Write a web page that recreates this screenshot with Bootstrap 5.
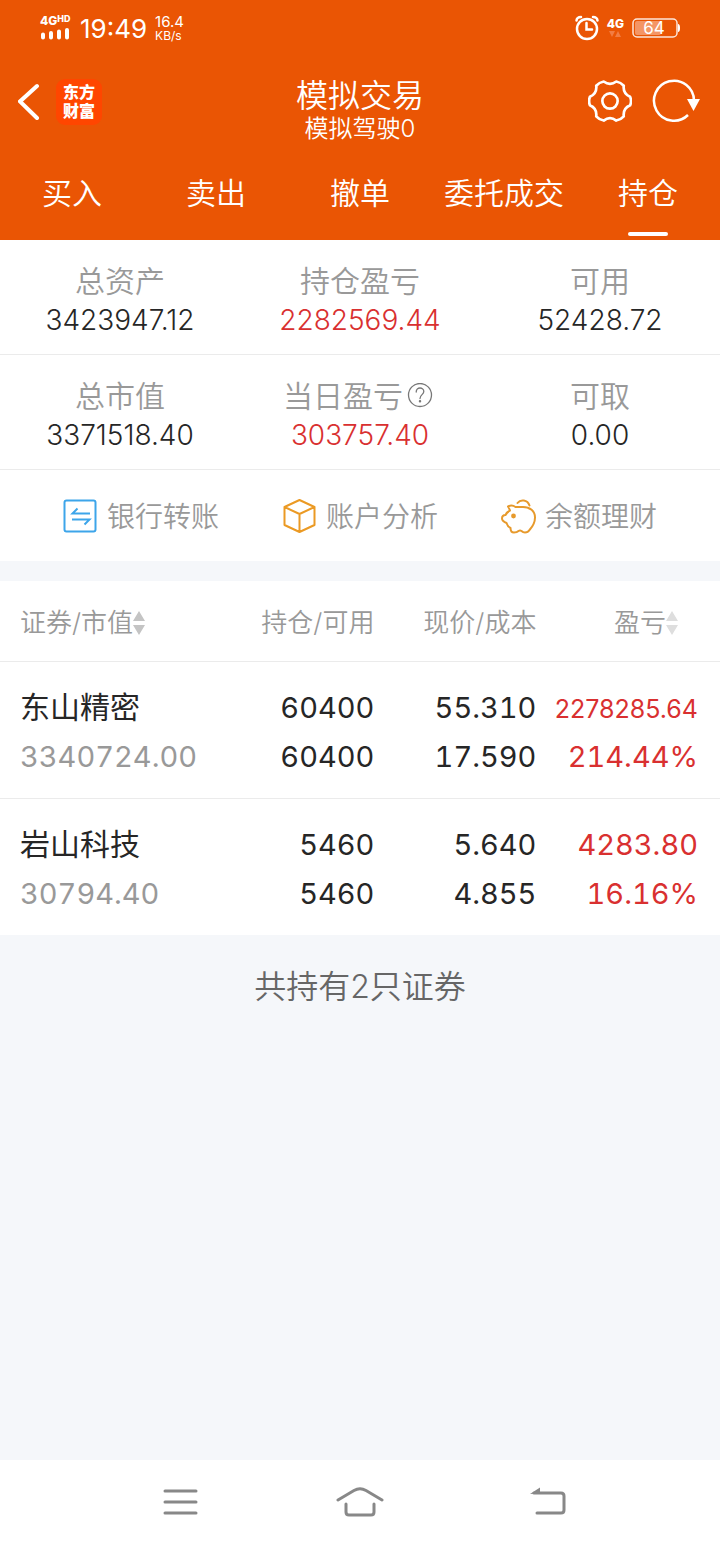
<!DOCTYPE html>
<html lang="zh-CN">
<head>
<meta charset="utf-8">
<meta name="viewport" content="width=device-width, initial-scale=1">
<title>模拟交易</title>
<link href="https://cdn.jsdelivr.net/npm/bootstrap@5.3.0/dist/css/bootstrap.min.css" rel="stylesheet">
<style>
  body { font-family: Inter, "Noto Sans CJK SC", sans-serif; background: #f5f7fa; color: #262626; }
  .plain-btn { border: 0; background: none; padding: 0; color: inherit; font-weight: inherit; display: inline-flex; align-items: center; }
  svg { display: block; flex: none; }
  .top-area { background: #ea5504; color: #fff; font-weight: 350; }
  .status-strip { height: 56px; padding: 0 40px; }
  .signal-box { font-size: 12px; line-height: 12px; font-weight: 800; }
  .signal-box sup { font-size: 9px; line-height: 8px; top: 0; vertical-align: top; }
  .clock { font-size: 26px; line-height: 32px; font-weight: 400; padding-top: 2px; }
  .net-speed { font-size: 15px; line-height: 13px; font-weight: 400; }
  .net-speed small { font-size: 12px; }
  .battery { font-size: 17px; font-weight: 400; }
  .title-bar { display: grid; grid-template-columns: 1fr auto 1fr; height: 92px; padding: 0 18px; }
  .title-bar h1 { font-size: 32px; line-height: 36px; font-weight: 350; }
  .title-bar p { font-size: 24px; line-height: 30px; }
  .title-block { padding-top: 18px; }
  .app-logo { background: #ff4600; border-radius: 9px; width: 46px; height: 46px; font-size: 16px; line-height: 19px; font-weight: 900; }
  .tab-row { height: 92px; }
  .tab-row a { position: relative; display: block; color: #fff; font-size: 30px; line-height: 90px; text-align: center; text-decoration: none; white-space: nowrap; }
  .tab-row a.active::after { content: ""; position: absolute; left: 50%; bottom: 4px; width: 40px; height: 4px; margin-left: -20px; border-radius: 2px; background: #fff; }
  .asset-row { height: 115px; border-bottom: 1px solid #ebebeb; font-weight: 350; padding-top: 21px; }
  .asset-row dt { font-size: 30px; line-height: 40px; font-weight: 350; color: #999; }
  .asset-row dd { font-size: 28px; line-height: 38px; margin: 0; }
  .action-row { height: 91px; color: #999; font-size: 28px; font-weight: 350; padding-top: 2px; }
  .action-row a { color: inherit; }
  .red-text { color: #d93030 !important; }
  .gray-text { color: #999 !important; }
  .holdings { table-layout: fixed; background: #fff; margin: 20px 0 0; width: 100%; }
  .holdings th, .holdings td { padding: 0; white-space: nowrap; }
  .holdings thead th { height: 80px; padding-top: 4px; color: #999; font-size: 26px; font-weight: 350; vertical-align: middle; }
  .holdings tbody tr { border-top: 1px solid #ebebeb; }
  .holdings tbody td { font-size: 29px; line-height: 49px; padding: 21px 0 17px; font-variant-numeric: tabular-nums; }
  .holdings tr > :first-child { padding-left: 20px; }
  .holdings tr > :last-child { padding-right: 22px; }
  .holdings thead tr > :last-child { padding-right: 42px; }
  .holdings .stock-name { font-size: 30px; line-height: 40px; }
  .holdings .long-num { font-size: 25px; line-height: 30px; font-variant-numeric: normal; }
  .count-note { font-size: 32px; line-height: 44px; color: #666; font-weight: 350; padding-top: 30px; }
  .system-nav { height: 84px; background: #fff; }
</style>
</head>
<body>
<div class="min-vh-100 d-flex flex-column">
  <header class="top-area">
    <div class="status-strip d-flex align-items-center">
      <div class="signal-box me-2">
        <div>4G<sup>HD</sup></div>
        <svg width="32" height="14" viewBox="0 0 32 14" stroke="#fff" stroke-width="4" stroke-linecap="round"><path d="M3 7.500v3M11 6v4.500M19 4.500v6M27 3v7.500"/></svg>
      </div>
      <div class="clock">19:49</div>
      <div class="net-speed ms-2">16.4<br><small>KB/s</small></div>
      <div class="d-flex align-items-center ms-auto">
        <svg width="24" height="26" viewBox="0 0 24 26" fill="none" stroke="#fff" stroke-width="2.500" stroke-linecap="round"><circle cx="12" cy="14" r="10"/><path d="M11.500 8v6.500H17M1.500 5.500Q2 2 6 2M18 2q4 0 4.500 3.500"/></svg>
        <div class="signal-box ms-2 text-center">4G
          <svg class="mx-auto" width="16" height="8" viewBox="0 0 16 8" fill="#f27d43"><path d="M2 1h6L5 7zM8 7h6l-3-6z"/></svg>
        </div>
        <svg class="battery ms-2" width="48" height="20" viewBox="0 0 48 20"><rect x="1" y="1" width="44" height="18" rx="4" fill="none" stroke="#fff" stroke-opacity=".85" stroke-width="1.500"/><rect x="3" y="3" width="26" height="14" rx="2" fill="#f49565"/><path d="M46 6q2 0 2 4t-2 4z" fill="#fff"/><text x="22" y="16" fill="#fff" text-anchor="middle">64</text></svg>
      </div>
    </div>
    <div class="title-bar align-items-center">
      <div class="d-flex align-items-center gap-3">
        <button class="plain-btn" aria-label="返回"><svg width="22" height="40" viewBox="2 0 22 40" fill="none" stroke="#fff" stroke-width="4" stroke-linecap="round"><path d="M21 4 4 19.500 21 36"/></svg></button>
        <div class="app-logo d-flex align-items-center justify-content-center text-center">东方<br>财富</div>
      </div>
      <div class="title-block text-center">
        <h1 class="m-0">模拟交易</h1>
        <p class="m-0">模拟驾驶0</p>
      </div>
      <div class="d-flex align-items-center justify-content-end gap-3">
        <button class="plain-btn me-1" aria-label="设置"><svg width="44" height="46" viewBox="0 0 46 46" fill="none" stroke="#fff" stroke-width="2.800" stroke-linejoin="round"><circle cx="23" cy="22" r="8"/><path transform="translate(0 -1)" d="M44 18.500Q46 23 44 27.500Q36.400 30.800 37.400 39Q34.300 42.500 29.600 43.400Q23 38.500 16.400 43.400Q11.700 42.500 8.600 39Q9.600 30.800 2 27.500Q.3 23 2 18.500Q9.600 15.200 8.600 7Q11.700 3.500 16.400 2.600Q23 7.500 29.600 2.600Q34.300 3.500 37.400 7Q36.400 15.200 44 18.500Z"/></svg></button>
        <button class="plain-btn" aria-label="刷新"><svg width="50" height="46" viewBox="0 0 50 46"><path d="M36 36A20 20 0 1 1 42 22" fill="none" stroke="#fff" stroke-width="2.500"/><path d="M35 20h13l-6.500 12z" fill="#fff"/></svg></button>
      </div>
    </div>
    <nav class="tab-row row g-0" aria-label="交易">
      <a class="col" href="#">买入</a>
      <a class="col" href="#">卖出</a>
      <a class="col" href="#">撤单</a>
      <a class="col" href="#">委托成交</a>
      <a class="col active" href="#" aria-current="page">持仓</a>
    </nav>
  </header>

  <main class="flex-grow-1">
    <section class="bg-white">
      <dl class="asset-row row g-0 m-0 text-center">
        <div class="col"><dt>总资产</dt><dd>3423947.12</dd></div>
        <div class="col"><dt>持仓盈亏</dt><dd class="red-text">2282569.44</dd></div>
        <div class="col"><dt>可用</dt><dd>52428.72</dd></div>
      </dl>
      <dl class="asset-row row g-0 m-0 text-center">
        <div class="col"><dt>总市值</dt><dd>3371518.40</dd></div>
        <div class="col">
          <dt class="d-flex justify-content-center gap-1">当日盈亏<button class="plain-btn me-1" aria-label="说明"><svg width="26" height="26" viewBox="0 0 26 26" fill="none" stroke="#777" stroke-width="1.300"><circle cx="13" cy="12" r="11.500"/><path d="M9.200 9c0-5.500 7.600-5 7.600-.5 0 3.300-3.800 3-3.800 7" stroke-linecap="round"/><circle cx="13" cy="18.300" r=".6" fill="#777"/></svg></button></dt>
          <dd class="red-text">303757.40</dd>
        </div>
        <div class="col"><dt>可取</dt><dd>0.00</dd></div>
      </dl>
      <div class="action-row d-flex align-items-center justify-content-evenly">
        <a class="d-flex align-items-center text-decoration-none" href="#"><svg class="me-2" width="36" height="36" viewBox="0 0 36 36" fill="none" stroke="#3da5ea" stroke-width="2"><rect x="1.500" y="1.500" width="31" height="31" rx="2"/><path d="M27 14.500H9.500l5-5M9 20.500h17.500l-5 5"/></svg>银行转账</a>
        <a class="d-flex align-items-center text-decoration-none" href="#"><svg class="me-2" width="36" height="36" viewBox="0 0 36 36" fill="none" stroke="#eb9a24" stroke-width="2" stroke-linejoin="round"><path d="M17.500 1 32.500 8v18l-15 7L2.500 26V8zM2.500 8l15 7 15-7M17.500 15v18"/></svg>账户分析</a>
        <a class="d-flex align-items-center text-decoration-none" href="#"><svg class="me-2" width="36" height="36" viewBox="0 0 36 36" fill="none" stroke="#e79a2c" stroke-width="2" stroke-linejoin="round" stroke-linecap="round"><path d="M7 7.500Q11 5.500 14.500 8H22C29 8 34 12 34 18.500Q34 25 28.500 31Q27 33.500 24 33.500Q22 33.500 20.500 32Q19 31 17.500 32Q16 33.500 13 33.500Q9.500 33.500 9.500 29Q6.500 27.500 5.500 24Q1 22 1 19.500Q1 16 4.500 16Q6 13 9 11.500Q8 9 7 7.500Z"/><path d="M16.500 4C19.500 0 26.500 .5 28.500 6.500"/><circle cx="12.500" cy="17" r="1.400" fill="#e79a2c"/></svg>余额理财</a>
      </div>
    </section>

    <table class="holdings">
      <colgroup><col style="width:29%"><col style="width:23%"><col style="width:22.500%"><col></colgroup>
      <thead>
        <tr>
          <th scope="col"><button class="plain-btn">证券/市值<svg width="12" height="24" viewBox="0 0 12 24" fill="#c4c4c4"><path d="M6 0l6 10H0zM6 24l6-10H0z"/></svg></button></th>
          <th scope="col" class="text-end">持仓/可用</th>
          <th scope="col" class="text-end">现价/成本</th>
          <th scope="col" class="text-end"><button class="plain-btn">盈亏<svg width="12" height="24" viewBox="0 0 12 24" fill="#dedede"><path d="M6 0l6 10H0zM6 24l6-10H0z"/></svg></button></th>
        </tr>
      </thead>
      <tbody>
        <tr>
          <td><span class="stock-name">东山精密</span><br><span class="gray-text">3340724.00</span></td>
          <td class="text-end">60400<br>60400</td>
          <td class="text-end">55.310<br>17.590</td>
          <td class="text-end red-text"><span class="long-num">2278285.64</span><br>214.44%</td>
        </tr>
        <tr>
          <td><span class="stock-name">岩山科技</span><br><span class="gray-text">30794.40</span></td>
          <td class="text-end">5460<br>5460</td>
          <td class="text-end">5.640<br>4.855</td>
          <td class="text-end red-text">4283.80<br>16.16%</td>
        </tr>
      </tbody>
    </table>
    <p class="count-note text-center m-0">共持有2只证券</p>
  </main>

  <footer class="system-nav d-flex align-items-center justify-content-center">
    <div class="row g-0 w-100 justify-content-center">
      <div class="col-3 d-flex justify-content-center"><button class="plain-btn" aria-label="菜单"><svg width="36" height="30" viewBox="0 0 36 30" stroke="#888" stroke-width="3" stroke-linecap="round"><path d="M3 4h31M3 15h31M3 26h31"/></svg></button></div>
      <div class="col-3 d-flex justify-content-center"><button class="plain-btn" aria-label="主页"><svg width="48" height="32" viewBox="0 0 48 32" fill="none" stroke="#888" stroke-width="3" stroke-linecap="round"><path d="M2 14 18 4.500q6-3.500 12 0l16 9.500M10 18v8q0 3 3 3h22q3 0 3-3v-8"/></svg></button></div>
      <div class="col-3 d-flex justify-content-center ps-3"><button class="plain-btn" aria-label="返回上一级"><svg width="36" height="30" viewBox="0 0 36 30" fill="none" stroke="#888" stroke-width="3" stroke-linecap="round"><path d="M4 6h27q3 0 3 3v14q0 3-3 3H7"/><path d="M0 7 10 .5v6z" fill="#888" stroke="none"/></svg></button></div>
    </div>
  </footer>
</div>
<script src="https://cdn.jsdelivr.net/npm/bootstrap@5.3.0/dist/js/bootstrap.bundle.min.js"></script>
</body>
</html>
